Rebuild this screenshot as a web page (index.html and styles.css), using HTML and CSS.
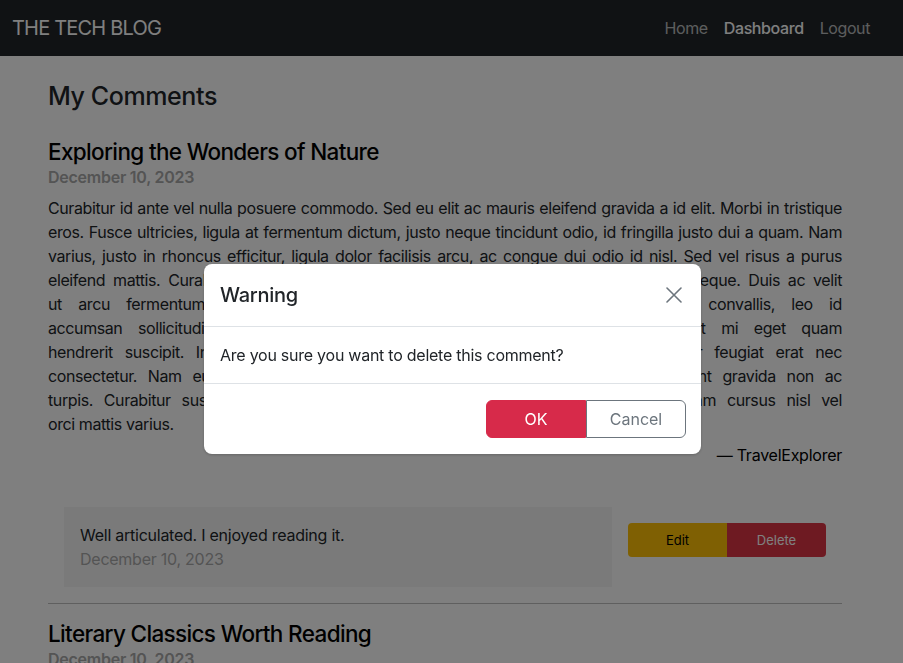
FILE: index.html
```html
<!DOCTYPE html>
<html lang="en">
<head>
<meta charset="utf-8">
<title>The Tech Blog</title>
<link rel="stylesheet" href="styles.css">
</head>
<body>
<nav class="navbar">
  <a class="brand" href="#">THE TECH BLOG</a>
  <ul class="nav">
    <li><a class="nav-link" href="#">Home</a></li>
    <li><a class="nav-link active" href="#">Dashboard</a></li>
    <li><a class="nav-link" href="#">Logout</a></li>
  </ul>
</nav>

<main class="page">
  <h3 class="page-title">My Comments</h3>

  <article class="post">
    <h4 class="post-title">Exploring the Wonders of Nature</h4>
    <div class="post-date">December 10, 2023</div>
    <p class="post-body">
      <span class="line">Curabitur id ante vel nulla posuere commodo. Sed eu elit ac mauris eleifend gravida a id elit. Morbi in tristique</span>
      <span class="line">eros. Fusce ultricies, ligula at fermentum dictum, justo neque tincidunt odio, id fringilla justo dui a quam. Nam</span>
      <span class="line">varius, justo in rhoncus efficitur, ligula dolor facilisis arcu, ac congue dui odio id nisl. Sed vel risus a purus</span>
      <span class="line">eleifend mattis. Curabitur ac nisl at urna fermentum ultrices vel vel nulla. Nullam at neque. Duis ac velit</span>
      <span class="line">ut arcu fermentum egestas. Etiam lacinia, nunc sed tempor faucibus, sed convallis, leo id</span>
      <span class="line">accumsan sollicitudin, lorem nisi vulputate nunc, vitae ligula ligula, ut feugiat mi eget quam</span>
      <span class="line">hendrerit suscipit. In eu lectus in quam fringilla varius ut vel velit. Etiam auctor feugiat erat nec</span>
      <span class="line">consectetur. Nam eu magna euismod, hendrerit libero eu, dignissim lectus tincidunt gravida non ac</span>
      <span class="line">turpis. Curabitur suscipit erat at dolor sodales, vitae convallis justo tristique. Nullam cursus nisl vel</span>
      <span class="line last">orci mattis varius.</span>
    </p>
    <div class="post-author">— TravelExplorer</div>

    <div class="comment-row">
      <div class="comment-card">
        <div class="comment-text">Well articulated. I enjoyed reading it.</div>
        <div class="comment-date">December 10, 2023</div>
      </div>
      <div class="comment-actions">
        <button class="btn-sm btn-edit">Edit</button>
        <button class="btn-sm btn-delete">Delete</button>
      </div>
    </div>
  </article>

  <hr class="divider">

  <article class="post">
    <h4 class="post-title">Literary Classics Worth Reading</h4>
    <div class="post-date">December 10, 2023</div>
  </article>
</main>

<div class="backdrop"></div>

<div class="modal">
  <div class="modal-header">
    <h5 class="modal-title">Warning</h5>
    <button class="close" aria-label="Close">
      <svg width="16" height="16" viewBox="0 0 16 16"><path d="M1 1L15 15M15 1L1 15" stroke="#6c757d" stroke-width="1.6" fill="none" stroke-linecap="round"/></svg>
    </button>
  </div>
  <div class="modal-body">Are you sure you want to delete this comment?</div>
  <div class="modal-footer">
    <div class="btn-group">
      <button class="btn btn-ok">OK</button>
      <button class="btn btn-cancel">Cancel</button>
    </div>
  </div>
</div>
</body>
</html>
```

FILE: styles.css
```css
* { box-sizing: border-box; }

html, body {
  margin: 0;
  height: 100%;
  overflow: hidden;
}

body {
  font-family: Inter, "Noto Sans", "Liberation Sans", sans-serif;
  font-size: 16px;
  line-height: 1.5;
  letter-spacing: -0.25px;
  color: #212529;
  background: #fff;
}

.navbar {
  height: 56px;
  background: #212529;
  display: flex;
  align-items: center;
  justify-content: space-between;
  padding: 0 25px 0 12px;
}

.brand {
  color: #fff;
  font-size: 20px;
  text-decoration: none;
  letter-spacing: -0.8px;
}

.nav {
  list-style: none;
  margin: 0;
  padding: 0;
  display: flex;
}

.nav-link {
  display: block;
  padding: 8px;
  color: rgba(255, 255, 255, 0.7);
  text-decoration: none;
  letter-spacing: -0.4px;
}

.nav-link.active {
  color: #fff;
  font-weight: 500;
}

.page {
  width: 794px;
  margin-left: 48px;
  padding-top: 25px;
}

.page-title {
  margin: 0 0 27px;
  font-size: 25px;
  font-weight: 500;
  line-height: 1.2;
  letter-spacing: -0.4px;
}

.post-title {
  margin: 0;
  font-size: 22.5px;
  font-weight: 500;
  line-height: 1.2;
  letter-spacing: -0.65px;
  color: #000;
}

.post-date {
  font-weight: 600;
  color: #a8a8a8;
  margin-top: 0;
}

.post-body {
  margin: 7px 0 7px;
  letter-spacing: -0.4px;
}

.line {
  display: block;
  white-space: nowrap;
  text-align: justify;
  text-align-last: justify;
}

.line.last {
  text-align-last: left;
}

.post-author {
  text-align: right;
  color: #000;
}

.comment-row {
  display: flex;
  align-items: flex-start;
  gap: 16px;
  padding: 40px 16px 16px;
}

.comment-card {
  flex: 1;
  background: #f5f5f5;
  padding: 16px;
}

.comment-date {
  color: #a8a8a8;
}

.comment-actions {
  display: flex;
  margin-top: 16px;
}

.btn-sm {
  width: 99px;
  height: 34px;
  border: 0;
  font-family: inherit;
  font-size: 13px;
}

.btn-edit {
  background: #ffc107;
  color: #000;
  border-radius: 4px 0 0 4px;
}

.btn-delete {
  background: #dc3545;
  color: #fff;
  border-radius: 0 4px 4px 0;
}

.divider {
  margin: 0 0 16px;
  border: 0;
  border-top: 1px solid rgba(0, 0, 0, 0.25);
}

.backdrop {
  position: fixed;
  inset: 0;
  background: rgba(0, 0, 0, 0.5);
}

.modal {
  position: fixed;
  top: 264px;
  left: 204px;
  width: 497px;
  background: #fff;
  border-radius: 8px;
  box-shadow: 0 1px 3px rgba(0, 0, 0, 0.2);
}

.modal-header {
  display: flex;
  align-items: center;
  justify-content: space-between;
  padding: 16px;
  border-bottom: 1px solid #dee2e6;
}

.modal-title {
  margin: 0;
  font-size: 20px;
  font-weight: 500;
  line-height: 1.5;
  letter-spacing: -0.3px;
}

.close {
  width: 24px;
  height: 24px;
  border: 0;
  background: none;
  padding: 0;
  display: flex;
  align-items: center;
  justify-content: center;
  margin-right: -1px;
}

.modal-body {
  padding: 16px;
}

.modal-footer {
  display: flex;
  justify-content: flex-end;
  padding: 16px 15px 16px 12px;
  border-top: 1px solid #dee2e6;
}

.btn-group {
  display: flex;
}

.btn {
  height: 38px;
  width: 100px;
  font-family: inherit;
  font-size: 16px;
  border: 1px solid transparent;
}

.btn-ok {
  background: #d72a4a;
  color: #fff;
  border-color: #d72a4a;
  border-radius: 6px 0 0 6px;
}

.btn-cancel {
  background: #fff;
  color: #6c757d;
  border-color: #6c757d;
  border-radius: 0 6px 6px 0;
}
```
